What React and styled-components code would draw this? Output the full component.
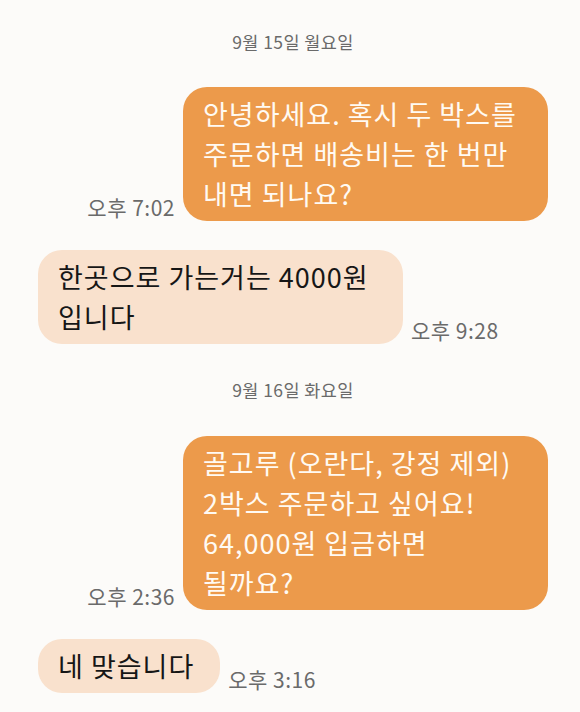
import React from "react";
import styled, { createGlobalStyle } from "styled-components";

const GlobalStyle = createGlobalStyle`
  html, body {
    margin: 0;
    padding: 0;
    background: #fcfbf9;
  }
  body {
    font-family: "Noto Sans CJK KR", "Noto Sans", sans-serif;
  }
`;

const messages = [
  { type: "date", text: "9월 15일 월요일" },
  {
    type: "sent",
    text: "안녕하세요. 혹시 두 박스를 주문하면 배송비는 한 번만 내면 되나요?",
    time: "오후 7:02",
  },
  {
    type: "received",
    text: "한곳으로 가는거는 4000원 입니다",
    time: "오후 9:28",
  },
  { type: "date", text: "9월 16일 화요일" },
  {
    type: "sent",
    text: "골고루 (오란다, 강정 제외) 2박스 주문하고 싶어요! 64,000원 입금하면\n될까요?",
    time: "오후 2:36",
  },
  { type: "received", text: "네 맞습니다", time: "오후 3:16" },
];

const App = () => {
  return (
    <Page>
      <GlobalStyle />
      {messages.map((m, i) =>
        m.type === "date" ? (
          <DateLabel key={i}>{m.text}</DateLabel>
        ) : (
          <Row key={i} $mine={m.type === "sent"}>
            <Bubble $mine={m.type === "sent"}>{m.text}</Bubble>
            <Time>{m.time}</Time>
          </Row>
        )
      )}
    </Page>
  );
};

export default App;

const Page = styled.div`
  display: flex;
  flex-direction: column;
  padding: 30px 32px 20px 38px;
  min-height: 712px;
  box-sizing: border-box;
`;

const DateLabel = styled.div`
  text-align: center;
  font-size: 17.5px;
  letter-spacing: 0.4px;
  line-height: 24px;
  color: #6a6a6a;
  margin-bottom: 33px;

  &:not(:first-child) {
    margin-top: 34px;
    margin-bottom: 34px;
  }
`;

const Row = styled.div`
  display: flex;
  flex-direction: ${(p) => (p.$mine ? "row-reverse" : "row")};
  align-items: flex-end;
  gap: 8px;

  & + & {
    margin-top: 29px;
  }
`;

const Bubble = styled.div`
  max-width: 365px;
  box-sizing: border-box;
  padding: 7px 26px 7px 20px;
  border-radius: 24px;
  font-size: 27px;
  letter-spacing: 1px;
  line-height: 40px;
  word-break: keep-all;
  white-space: pre-line;
  background: ${(p) => (p.$mine ? "#ec9a4b" : "#f9e1cd")};
  color: ${(p) => (p.$mine ? "#fffaf3" : "#161616")};
`;

const Time = styled.span`
  font-size: 21px;
  letter-spacing: 0.5px;
  line-height: 26px;
  margin-bottom: 1px;
  color: #6a6a6a;
  white-space: nowrap;
`;
